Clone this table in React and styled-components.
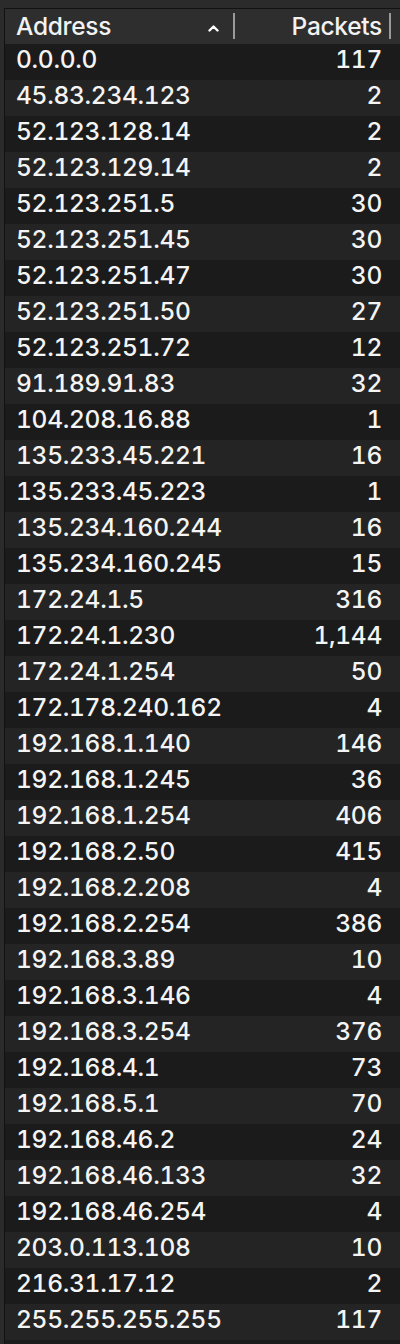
import styled, { createGlobalStyle } from 'styled-components';

const GlobalStyle = createGlobalStyle`
  html, body {
    margin: 0;
    padding: 0;
    background: #2b2b2b;
  }
  body {
    font-family: Inter, "Noto Sans", "Liberation Sans", sans-serif;
    -webkit-font-smoothing: antialiased;
  }
`;

const Frame = styled.div`
  width: 400px;
  height: 1344px;
  overflow: hidden;
  background: #2b2b2b;
  padding: 8px 0 0 4px;
  box-sizing: border-box;
`;

const Table = styled.div`
  border-top: 1px solid #121212;
  border-left: 1px solid #121212;
  background: #1b1b1b;
  height: 100%;
`;

const Header = styled.div`
  display: grid;
  grid-template-columns: 230px 156px 1fr;
  height: 35px;
  background: #2e2e2e;
  color: #f2f2f2;
  font-size: 24.5px;
  font-weight: 500;
  letter-spacing: -0.3px;
`;

const HeadCell = styled.div`
  position: relative;
  display: flex;
  align-items: center;
  justify-content: ${p => (p.$right ? 'flex-end' : 'space-between')};
  padding: ${p => (p.$right ? '0 9px 0 0' : '0 16px 0 11px')};
  padding-bottom: 2px;
  box-sizing: border-box;

  &::after {
    content: '';
    position: absolute;
    right: 0;
    top: 4px;
    width: 2px;
    height: 26px;
    background: #9a9a9a;
  }
`;

const Chevron = styled.svg`
  width: 11px;
  height: 8px;
  margin-top: 4px;
`;

const Row = styled.div`
  display: grid;
  grid-template-columns: 1fr auto;
  align-items: center;
  height: 36px;
  padding: 0 18px 6px 11px;
  box-sizing: border-box;
  background: ${p => (p.$alt ? '#242424' : '#1b1b1b')};
  color: #f4f4f4;
  font-size: 24.5px;
  font-weight: 500;
  letter-spacing: -0.3px;
  font-variant-numeric: tabular-nums;
`;

const Num = styled.span`
  text-align: right;
`;

const rows = [
  ['0.0.0.0', '117'],
  ['45.83.234.123', '2'],
  ['52.123.128.14', '2'],
  ['52.123.129.14', '2'],
  ['52.123.251.5', '30'],
  ['52.123.251.45', '30'],
  ['52.123.251.47', '30'],
  ['52.123.251.50', '27'],
  ['52.123.251.72', '12'],
  ['91.189.91.83', '32'],
  ['104.208.16.88', '1'],
  ['135.233.45.221', '16'],
  ['135.233.45.223', '1'],
  ['135.234.160.244', '16'],
  ['135.234.160.245', '15'],
  ['172.24.1.5', '316'],
  ['172.24.1.230', '1,144'],
  ['172.24.1.254', '50'],
  ['172.178.240.162', '4'],
  ['192.168.1.140', '146'],
  ['192.168.1.245', '36'],
  ['192.168.1.254', '406'],
  ['192.168.2.50', '415'],
  ['192.168.2.208', '4'],
  ['192.168.2.254', '386'],
  ['192.168.3.89', '10'],
  ['192.168.3.146', '4'],
  ['192.168.3.254', '376'],
  ['192.168.4.1', '73'],
  ['192.168.5.1', '70'],
  ['192.168.46.2', '24'],
  ['192.168.46.133', '32'],
  ['192.168.46.254', '4'],
  ['203.0.113.108', '10'],
  ['216.31.17.12', '2'],
  ['255.255.255.255', '117'],
];

export default function App() {
  return (
    <>
      <GlobalStyle />
      <Frame>
        <Table>
          <Header>
            <HeadCell>
              Address
              <Chevron viewBox="0 0 11 8">
                <polyline
                  points="1.5,6.5 5.5,2.5 9.5,6.5"
                  fill="none"
                  stroke="#ffffff"
                  strokeWidth="2.4"
                  strokeLinecap="round"
                  strokeLinejoin="round"
                />
              </Chevron>
            </HeadCell>
            <HeadCell $right>Packets</HeadCell>
            <div />
          </Header>
          {rows.map(([addr, count], i) => (
            <Row key={addr} $alt={i % 2 === 1}>
              <span>{addr}</span>
              <Num>{count}</Num>
            </Row>
          ))}
        </Table>
      </Frame>
    </>
  );
}
